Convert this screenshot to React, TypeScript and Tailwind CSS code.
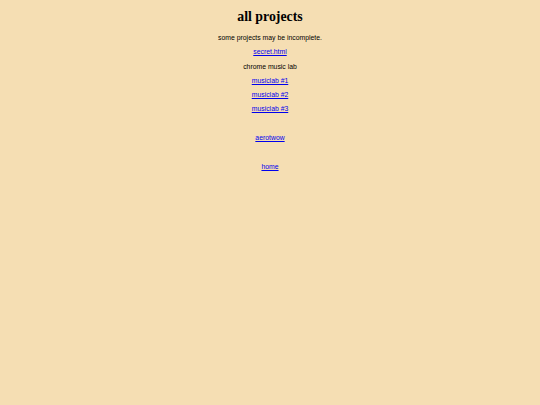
export default function App() {
  const link = "text-[#0000ee] underline";
  return (
    <div className="min-h-[405px] w-full bg-[#f5deb3] flex flex-col items-center text-black">
      <h1 className="mt-[9px] h-[16px] leading-[16px] text-[13.8px] font-bold text-black [font-family:'Liberation_Serif',serif]">all projects</h1>
      <div className="mt-[6px] flex flex-col items-center text-[6.85px] leading-[14.3px] [font-family:'Liberation_Sans',Arial,sans-serif]">
        <p>some projects may be incomplete.</p>
        <p><a className={link} href="#">secret.html</a></p>
        <p>chrome music lab</p>
        <p><a className={link} href="#">musiclab #1</a></p>
        <p><a className={link} href="#">musiclab #2</a></p>
        <p><a className={link} href="#">musiclab #3</a></p>
        <p className="h-[14.3px]"></p>
        <p><a className={link} href="#">aerotwow</a></p>
        <p className="h-[14.3px]"></p>
        <p><a className={link} href="#">home</a></p>
      </div>
    </div>
  );
}
